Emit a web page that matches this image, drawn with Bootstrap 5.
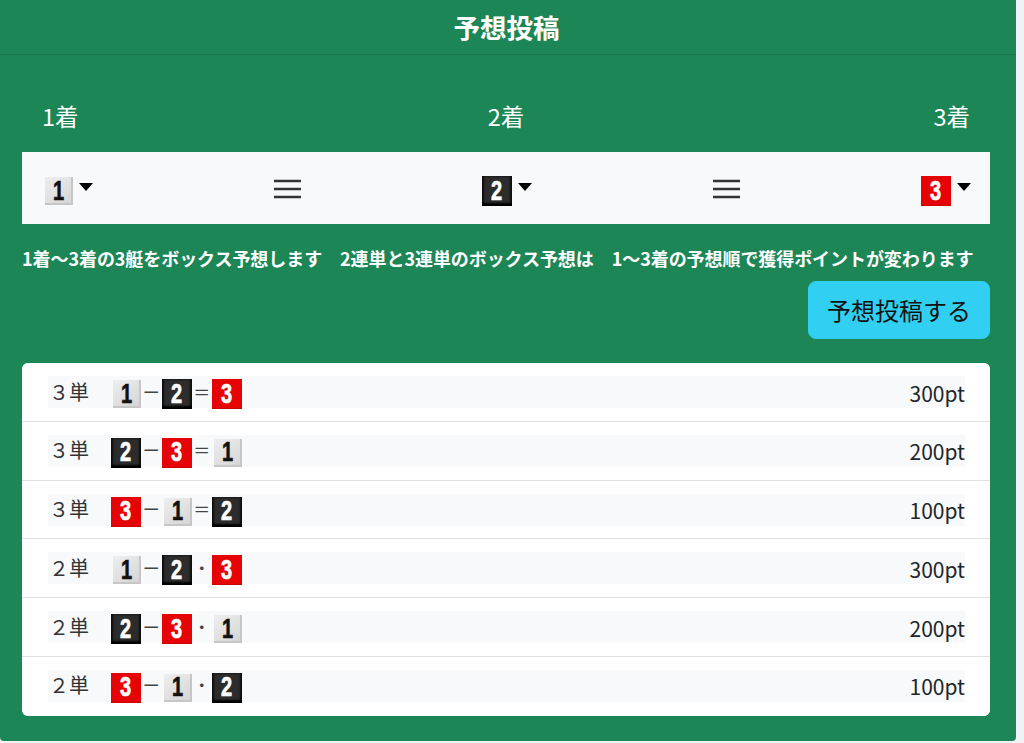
<!DOCTYPE html>
<html lang="ja">
<head>
<meta charset="utf-8">
<title>予想投稿</title>
<link href="https://cdn.jsdelivr.net/npm/bootstrap@5.3.0/dist/css/bootstrap.min.css" rel="stylesheet">
<style>
html,body{height:743px;overflow:hidden}
body{background:#f0f3f6;font-family:"Noto Sans CJK JP","Noto Sans",sans-serif;color:#212529}
.post-card{width:1016px;height:741px;background:#1c8656;border:0;border-radius:0 0 4px 4px;color:#fff}
.post-head{height:55px;background:#1c8656;border-bottom:1px solid #18734a;font-size:26.5px;font-weight:700;line-height:53px;text-align:center;padding:0 3px 0 0;border-radius:0}
.post-body{padding:0 26px 0 22px}
.place-row{padding:45px 20px 0 20px;height:97px;font-size:23.5px;line-height:32px}
.pick-bar{height:72px;background:#f8f9fa;padding:6px 19px 0 22px}
.pick{display:flex;align-items:center;gap:6px;padding:0;border:0;background:none}
.caret{width:0;height:0;border-left:7px solid transparent;border-right:7px solid transparent;border-top:8px solid #000;margin-top:-9px}
.bars{margin-top:-5px}
.note{font-size:18px;font-weight:700;line-height:24px;margin-top:22px;white-space:nowrap;display:flex;gap:18px;letter-spacing:-.07px}
.send-wrap{height:93px}
.send-btn{width:182px;height:58px;margin-top:11px;font-size:24px;line-height:1;background:#31d0f3;border-color:#31d0f3;color:#111;border-radius:8px;padding:0}
.rank-list{height:353px;border-radius:6px;border:0;background:#fff;overflow:hidden;color:#212529}
.rank-item{height:58.8px;padding:13px 25px 0 26px;border:0;border-bottom:1px solid #dfe1e3;background:#fff}
.rank-item:last-child{border-bottom:0}
.rank-in{height:32px;background:#f8f9fa;display:flex;align-items:center;font-size:20px}
.kind{width:63px;padding-left:1px;font-size:20px;line-height:32px;margin-top:-1px;white-space:nowrap;color:#333}
.combo{display:flex;align-items:center;width:131px;justify-content:space-between;margin-top:4px}
.sep{font-size:17px;line-height:1;width:20px;text-align:center;margin-top:-6px;color:#444}
.pts{margin-left:auto;font-size:21px;line-height:32px;margin-top:1px}
.boat{display:inline-flex;align-items:center;justify-content:center;width:30px;height:30px;font-family:"Liberation Sans",sans-serif;font-weight:700;font-size:27px;line-height:1}
.boat b{display:inline-block;transform:scaleX(.74);-webkit-text-stroke:.7px currentColor}
.b1{background:linear-gradient(145deg,#eeeeee,#d4d4d4);color:#111;box-shadow:inset -2px -2px 0 #c6c6c6;width:28px;height:28px;margin-left:2px}
.pick .b1{margin-left:1px}
.b2{background:#2c2c2c;color:#fff;box-shadow:inset 0 -3px 2px #000,inset 2px 0 2px #111,inset -2px 0 2px #111}
.b3{background:#e60306;color:#fff;box-shadow:inset 0 -1px 1px #c00}
</style>
</head>
<body>
<div class="card post-card">
  <div class="card-header post-head">予想投稿</div>
  <div class="card-body post-body">
    <div class="d-flex justify-content-between place-row"><span>1着</span><span>2着</span><span>3着</span></div>
    <div class="d-flex justify-content-between align-items-center pick-bar">
      <button class="pick" type="button"><span class="boat b1"><b>1</b></span><span class="caret"></span></button>
      <svg class="bars" width="28" height="20" viewBox="0 0 28 20"><path d="M0 2h27M0 10h27M0 18h27" stroke="#333" stroke-width="2.6" fill="none"/></svg>
      <button class="pick" type="button"><span class="boat b2"><b>2</b></span><span class="caret"></span></button>
      <svg class="bars" width="28" height="20" viewBox="0 0 28 20"><path d="M0 2h27M0 10h27M0 18h27" stroke="#333" stroke-width="2.6" fill="none"/></svg>
      <button class="pick" type="button"><span class="boat b3"><b>3</b></span><span class="caret"></span></button>
    </div>
    <div class="note"><span>1着〜3着の3艇をボックス予想します</span><span>2連単と3連単のボックス予想は</span><span>1〜3着の予想順で獲得ポイントが変わります</span></div>
    <div class="d-flex justify-content-end send-wrap"><button class="btn btn-info send-btn" type="button">予想投稿する</button></div>
    <ul class="list-group rank-list">
      <li class="list-group-item rank-item"><div class="rank-in"><span class="kind">３単</span><span class="combo"><span class="boat b1"><b>1</b></span><span class="sep">ー</span><span class="boat b2"><b>2</b></span><span class="sep">＝</span><span class="boat b3"><b>3</b></span></span><span class="pts">300pt</span></div></li>
      <li class="list-group-item rank-item"><div class="rank-in"><span class="kind">３単</span><span class="combo"><span class="boat b2"><b>2</b></span><span class="sep">ー</span><span class="boat b3"><b>3</b></span><span class="sep">＝</span><span class="boat b1"><b>1</b></span></span><span class="pts">200pt</span></div></li>
      <li class="list-group-item rank-item"><div class="rank-in"><span class="kind">３単</span><span class="combo"><span class="boat b3"><b>3</b></span><span class="sep">ー</span><span class="boat b1"><b>1</b></span><span class="sep">＝</span><span class="boat b2"><b>2</b></span></span><span class="pts">100pt</span></div></li>
      <li class="list-group-item rank-item"><div class="rank-in"><span class="kind">２単</span><span class="combo"><span class="boat b1"><b>1</b></span><span class="sep">ー</span><span class="boat b2"><b>2</b></span><span class="sep">・</span><span class="boat b3"><b>3</b></span></span><span class="pts">300pt</span></div></li>
      <li class="list-group-item rank-item"><div class="rank-in"><span class="kind">２単</span><span class="combo"><span class="boat b2"><b>2</b></span><span class="sep">ー</span><span class="boat b3"><b>3</b></span><span class="sep">・</span><span class="boat b1"><b>1</b></span></span><span class="pts">200pt</span></div></li>
      <li class="list-group-item rank-item"><div class="rank-in"><span class="kind">２単</span><span class="combo"><span class="boat b3"><b>3</b></span><span class="sep">ー</span><span class="boat b1"><b>1</b></span><span class="sep">・</span><span class="boat b2"><b>2</b></span></span><span class="pts">100pt</span></div></li>
    </ul>
  </div>
</div>
<script src="https://cdn.jsdelivr.net/npm/bootstrap@5.3.0/dist/js/bootstrap.bundle.min.js"></script>
</body>
</html>
